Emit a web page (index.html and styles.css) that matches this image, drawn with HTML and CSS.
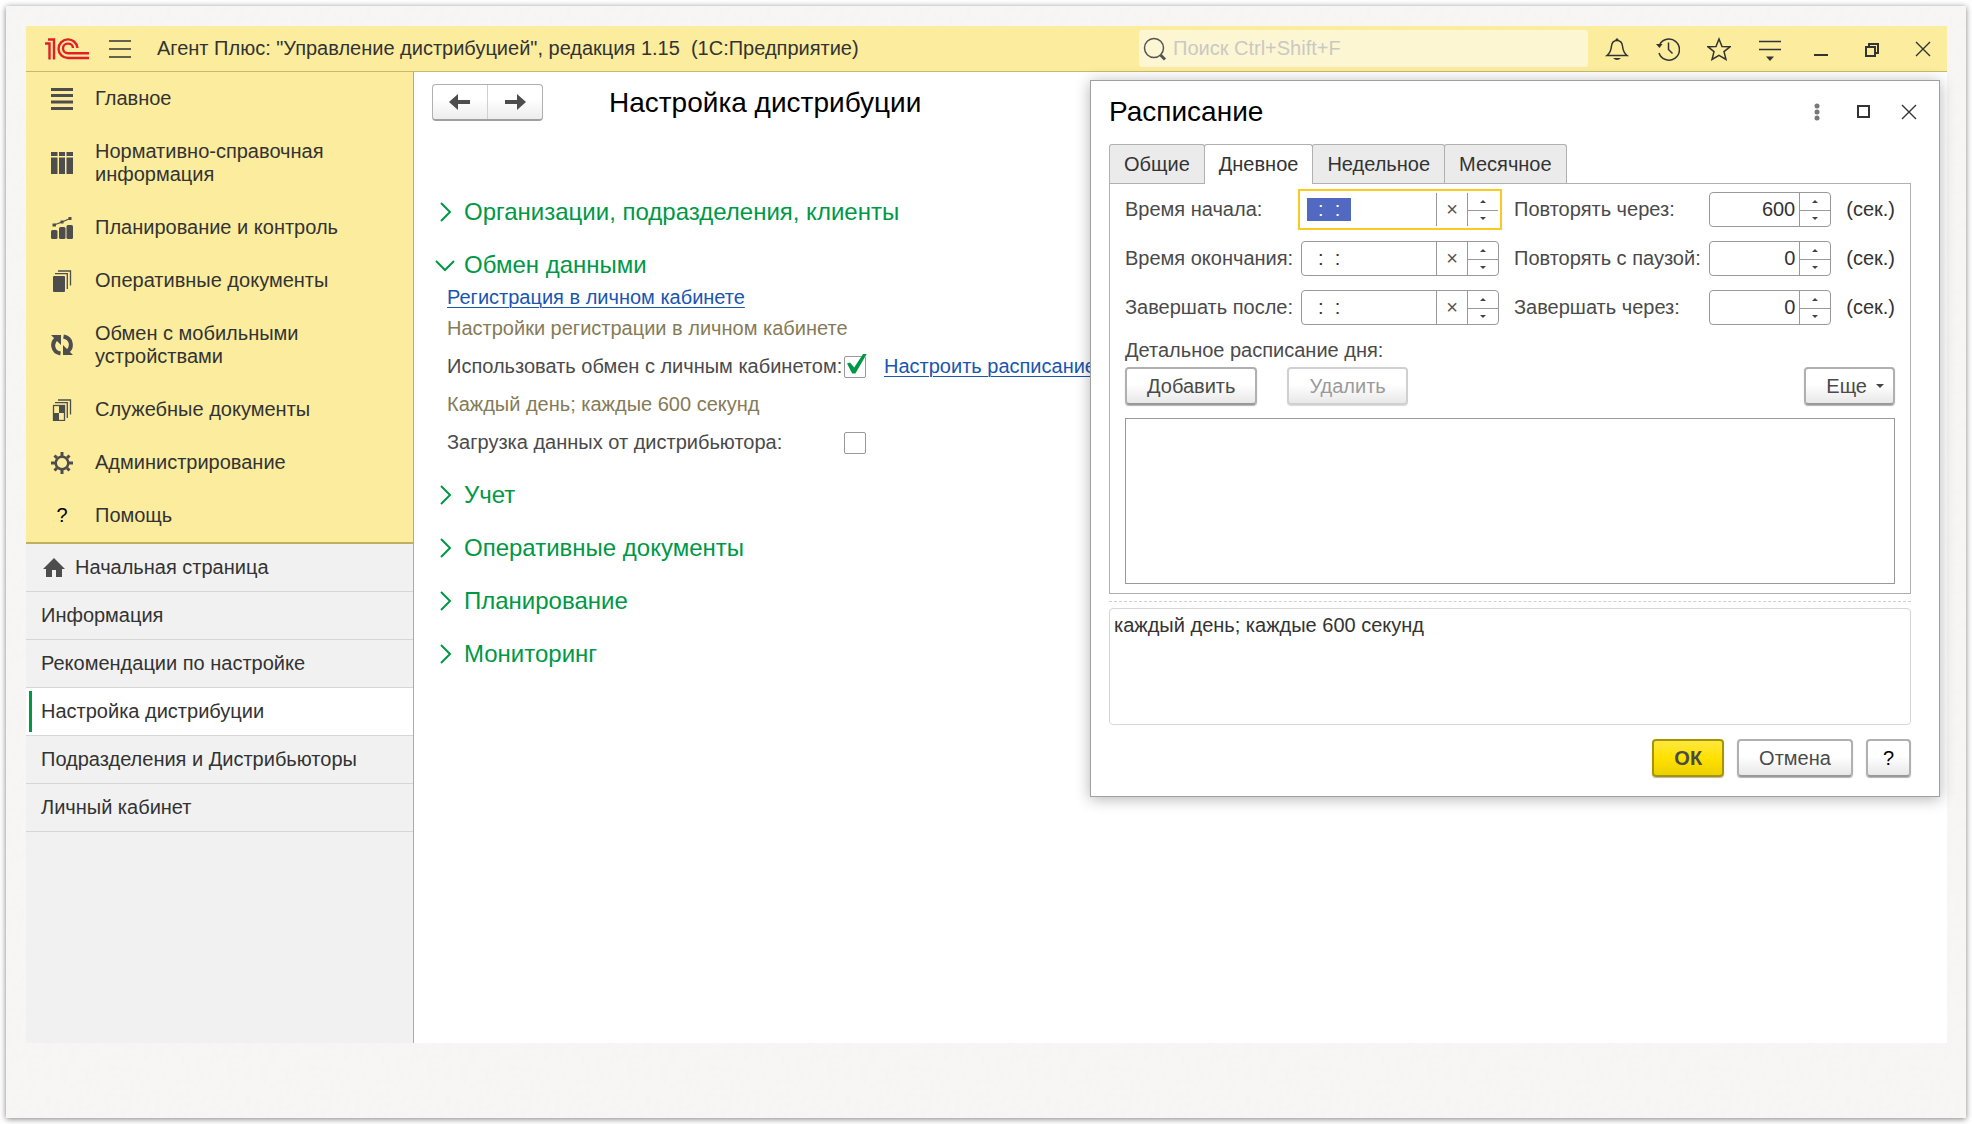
FILE: index.html
```html
<!DOCTYPE html>
<html lang="ru">

<head>
  <meta charset="UTF-8">
  <meta name="viewport" content="width=device-width, initial-scale=1.0">
  <title>Агент Плюс: Управление дистрибуцией</title>
  <link rel="stylesheet" href="styles.css">
</head>

<body>

  <div class="sheet">
    <div class="app">

      <!-- Top bar -->
      <header class="topbar">
        <svg class="logo" width="44" height="22" viewBox="0 0 44 22" fill="none" stroke="#e31e24" stroke-width="2.400">
          <path d="M0 5.500H4.500V21.500M3 1.500H9V21.500" />
          <path d="M32.500 10A9.500 9.300 0 1 0 23 20H44M28 10A5 4.800 0 1 0 23 15.200H44" />
        </svg>
        <button class="icon-btn burger" aria-label="Меню">
          <svg width="22" height="18" viewBox="0 0 22 18" stroke="#333" stroke-width="1.300"><path d="M0 1H22M0 9H22M0 17H22" /></svg>
        </button>
        <span class="app-title">Агент Плюс: "Управление дистрибуцией", редакция 1.15&nbsp; (1С:Предприятие)</span>
        <label class="search">
          <svg width="24" height="24" viewBox="0 0 24 24" fill="none" stroke="#555" stroke-width="1.500"><circle cx="11" cy="11" r="9.500" /><path d="M17.500 18L22 22.500" stroke-width="3" /></svg>
          <input type="text" placeholder="Поиск Ctrl+Shift+F" aria-label="Поиск">
        </label>
        <div class="top-icons">
          <button class="icon-btn" aria-label="Уведомления">
            <svg width="24" height="24" viewBox="0 0 24 24" fill="none" stroke="#333" stroke-width="1.500"><path d="M2 18.500C4 17 6 14 6.500 9C7 5 9 3.500 12 3.500S17 5 17.500 9C18 14 20 17 22 18.500Z" /><path d="M10 3.500Q12 -1 14 3.500Z M8 21H16Q12 25 8 21Z" fill="#333" stroke="none" /></svg>
          </button>
          <button class="icon-btn" aria-label="История">
            <svg width="24" height="24" viewBox="0 0 24 24" fill="none" stroke="#333" stroke-width="1.500"><path d="M3.500 8A10.500 10.500 0 1 1 3 16" /><path d="M12.500 5.500V12.500L16.500 16.500" /><path d="M0 7L6.500 7L3.500 11Z" fill="#333" stroke="none" /></svg>
          </button>
          <button class="icon-btn" aria-label="Избранное">
            <svg width="24" height="24" viewBox="0 0 24 24" fill="none" stroke="#333" stroke-width="1.500"><path d="M12 2L15 9.500L23 9.800L17 14.600L19 22.500L12 18.300L5 22.500L7 14.600L1 9.800L9 9.500Z" /></svg>
          </button>
          <button class="icon-btn" aria-label="Настройки">
            <svg width="24" height="24" viewBox="0 0 24 24" fill="none" stroke="#333" stroke-width="1.700"><path d="M1 4.500H23M1 12.500H23" /><path d="M8 19.500H16L12 24Z" fill="#333" stroke="none" /></svg>
          </button>
          <button class="icon-btn" aria-label="Свернуть">
            <svg width="24" height="24" viewBox="0 0 24 24"><path d="M5 17H19V19H5Z" fill="#333" /></svg>
          </button>
          <button class="icon-btn" aria-label="Восстановить">
            <svg width="24" height="24" viewBox="0 0 24 24" fill="none" stroke="#333" stroke-width="2"><path d="M6 10H15V19H6ZM9 10V7H18V16H15" /></svg>
          </button>
          <button class="icon-btn" aria-label="Закрыть">
            <svg width="24" height="24" viewBox="0 0 24 24" fill="none" stroke="#333" stroke-width="1.400"><path d="M5 5L19 19M19 5L5 19" /></svg>
          </button>
        </div>
      </header>

      <div class="workspace">

        <!-- Sidebar -->
        <aside class="sidebar">
          <nav class="sections">
            <a href="#">
              <svg width="22" height="22" viewBox="0 0 22 22" fill="#4d4d4d"><path d="M0 0H22V3H0ZM0 6H22V9H0ZM0 12.500H22V15.500H0ZM0 19H22V22H0Z" /></svg>
              Главное
            </a>
            <a href="#">
              <svg width="22" height="22" viewBox="0 0 22 22" fill="#4d4d4d"><path d="M0 0H6.500V4H0ZM8 0H14V4H8ZM15.500 0H22V4H15.500ZM0 5.500H6.500V22H0ZM8 5.500H14V22H8ZM15.500 5.500H22V22H15.500Z" /></svg>
              Нормативно-справочная информация
            </a>
            <a href="#">
              <svg width="22" height="22" viewBox="0 0 22 22" fill="#4d4d4d"><rect x="0" y="13" width="6.500" height="9" rx="1.500" /><rect x="8" y="10" width="6.500" height="12" rx="1.500" /><rect x="15.500" y="8" width="6.500" height="14" rx="1.500" /><path d="M3 8L11 5L19 1.500" stroke="#4d4d4d" stroke-width="1.300" /><path d="M1.500 6.500H5V9.500H1.500ZM9.500 3.500H12.500V6.500H9.500ZM17.500 0H20.500V3H17.500Z" /></svg>
              Планирование и контроль
            </a>
            <a href="#">
              <svg width="22" height="22" viewBox="0 0 22 22" fill="none" stroke="#4d4d4d" stroke-width="1.300"><rect x="2" y="6" width="12" height="16" rx="1" fill="#4d4d4d" stroke="none" /><path d="M4 3.700H16.300V19M7 1H19.500V15.500" /></svg>
              Оперативные документы
            </a>
            <a href="#">
              <svg width="22" height="22" viewBox="0 0 22 22" fill="none" stroke="#4d4d4d" stroke-width="4"><path d="M9.500 19.500C1 18 0 8 6 4.500M12.500 2.500C21 4 22 14 16 17.500" /><path d="M0 1H10V11ZM22 21H12V11Z" fill="#4d4d4d" stroke="none" /></svg>
              Обмен с мобильными устройствами
            </a>
            <a href="#">
              <svg width="22" height="22" viewBox="0 0 22 22" fill="none" stroke="#4d4d4d" stroke-width="1.300"><rect x="2.500" y="6.500" width="11" height="15" /><path d="M3 7H8V14H3ZM8 14H13V21H8Z" fill="#4d4d4d" stroke="none" transform="matrix(-1 0 0 1 16 0)" /><path d="M4 3.700H16.300V19M7 1H19.500V15.500" /></svg>
              Служебные документы
            </a>
            <a href="#">
              <svg width="22" height="22" viewBox="0 0 22 22" fill="none" stroke="#4d4d4d" stroke-width="3"><circle cx="11" cy="11" r="6.300" stroke-width="2.500" /><path d="M11 0V4M11 18V22M0 11H4M18 11H22M3.500 3.500L6 6M16 16L18.500 18.500M18.500 3.500L16 6M3.500 18.500L6 16" /></svg>
              Администрирование
            </a>
            <a href="#"><span class="help-mark">?</span>Помощь</a>
          </nav>
          <nav class="open-tabs">
            <a href="#" class="home">
              <svg width="22" height="20" viewBox="0 0 22 20" fill="#4d4d4d"><path d="M11 0L22 11H19V19H13V12H9V19H3V11H0Z" /></svg>
              Начальная страница
            </a>
            <a href="#">Информация</a>
            <a href="#">Рекомендации по настройке</a>
            <a href="#" class="active">Настройка дистрибуции</a>
            <a href="#">Подразделения и Дистрибьюторы</a>
            <a href="#">Личный кабинет</a>
          </nav>
        </aside>

        <!-- Settings page -->
        <main class="content">
          <div class="page-head">
            <div class="history-nav">
              <button aria-label="Назад"><svg width="22" height="16" viewBox="0 0 22 16" fill="#4d4d4d"><path d="M0 8L9 0V6H21V10H9V16Z" /></svg></button>
              <button aria-label="Вперед"><svg width="22" height="16" viewBox="0 0 22 16" fill="#4d4d4d"><path d="M22 8L13 0V6H1V10H13V16Z" /></svg></button>
            </div>
            <h1>Настройка дистрибуции</h1>
          </div>

          <div class="groups">
            <h2><svg width="20" height="20" viewBox="0 0 20 20"><path d="M6 1L15 10L6 19" /></svg>Организации, подразделения, клиенты</h2>

            <h2><svg width="20" height="20" viewBox="0 0 20 20"><path d="M1 6L10 15L19 6" /></svg>Обмен данными</h2>
            <div class="group-body">
              <div class="register">
                <a href="#">Регистрация в личном кабинете</a>
                <p>Настройки регистрации в личном кабинете</p>
              </div>
              <div class="option">
                <label for="useExchange">Использовать обмен с личным кабинетом:</label>
                <input type="checkbox" id="useExchange" checked>
                <a href="#">Настроить расписание</a>
              </div>
              <p>Каждый день; каждые 600 секунд</p>
              <div class="option">
                <label for="loadData">Загрузка данных от дистрибьютора:</label>
                <input type="checkbox" id="loadData">
              </div>
            </div>

            <h2><svg width="20" height="20" viewBox="0 0 20 20"><path d="M6 1L15 10L6 19" /></svg>Учет</h2>
            <h2><svg width="20" height="20" viewBox="0 0 20 20"><path d="M6 1L15 10L6 19" /></svg>Оперативные документы</h2>
            <h2><svg width="20" height="20" viewBox="0 0 20 20"><path d="M6 1L15 10L6 19" /></svg>Планирование</h2>
            <h2><svg width="20" height="20" viewBox="0 0 20 20"><path d="M6 1L15 10L6 19" /></svg>Мониторинг</h2>
          </div>
        </main>
      </div>

      <!-- Schedule window -->
      <section class="dialog" role="dialog" aria-labelledby="dialogTitle">
        <div class="dialog-head">
          <h1 id="dialogTitle">Расписание</h1>
          <div class="dialog-icons">
            <button class="icon-btn" aria-label="Еще"><svg width="24" height="24" viewBox="0 0 24 24" fill="#777"><circle cx="12" cy="6" r="2.500" /><circle cx="12" cy="12" r="2.500" /><circle cx="12" cy="18" r="2.500" /></svg></button>
            <button class="icon-btn" aria-label="Развернуть"><svg width="24" height="24" viewBox="0 0 24 24" fill="none" stroke="#333" stroke-width="2"><path d="M7 6H18V17H7Z" /></svg></button>
            <button class="icon-btn" aria-label="Закрыть"><svg width="24" height="24" viewBox="0 0 24 24" fill="none" stroke="#333" stroke-width="1.400"><path d="M5 5L19 19M19 5L5 19" /></svg></button>
          </div>
        </div>

        <div class="tabs" role="tablist">
          <button role="tab">Общие</button>
          <button role="tab" class="active">Дневное</button>
          <button role="tab">Недельное</button>
          <button role="tab">Месячное</button>
        </div>

        <div class="panel">
          <div class="fields">
            <label for="timeStart">Время начала:</label>
            <div class="field">
              <input type="text" id="timeStart" value="  :  :  ">
              <button class="clear" aria-label="Очистить">×</button>
              <div class="spin"><button aria-label="Больше"></button><button aria-label="Меньше"></button></div>
            </div>
            <label for="repeatEvery" class="second">Повторять через:</label>
            <div class="field number">
              <input type="text" id="repeatEvery" value="600">
              <div class="spin"><button aria-label="Больше"></button><button aria-label="Меньше"></button></div>
            </div>
            <span class="unit">(сек.)</span>

            <label for="timeEnd">Время окончания:</label>
            <div class="field">
              <input type="text" id="timeEnd" value="  :  :  ">
              <button class="clear" aria-label="Очистить">×</button>
              <div class="spin"><button aria-label="Больше"></button><button aria-label="Меньше"></button></div>
            </div>
            <label for="repeatPause" class="second">Повторять с паузой:</label>
            <div class="field number">
              <input type="text" id="repeatPause" value="0">
              <div class="spin"><button aria-label="Больше"></button><button aria-label="Меньше"></button></div>
            </div>
            <span class="unit">(сек.)</span>

            <label for="finishAfter">Завершать после:</label>
            <div class="field">
              <input type="text" id="finishAfter" value="  :  :  ">
              <button class="clear" aria-label="Очистить">×</button>
              <div class="spin"><button aria-label="Больше"></button><button aria-label="Меньше"></button></div>
            </div>
            <label for="finishIn" class="second">Завершать через:</label>
            <div class="field number">
              <input type="text" id="finishIn" value="0">
              <div class="spin"><button aria-label="Больше"></button><button aria-label="Меньше"></button></div>
            </div>
            <span class="unit">(сек.)</span>
          </div>

          <p class="caption">Детальное расписание дня:</p>
          <div class="commands">
            <button class="btn">Добавить</button>
            <button class="btn" disabled>Удалить</button>
            <button class="btn more">Еще <span class="caret"></span></button>
          </div>
          <div class="day-list"></div>
        </div>

        <hr>
        <textarea class="summary" aria-label="Описание расписания" readonly>каждый день; каждые 600 секунд</textarea>

        <div class="actions">
          <button class="btn primary">ОК</button>
          <button class="btn">Отмена</button>
          <button class="btn help">?</button>
        </div>
      </section>

    </div>
  </div>

  <script>
    // Start editing from the first time field
    document.getElementById('timeStart').focus();
    document.getElementById('timeStart').select();
  </script>

</body>

</html>
```
FILE: styles.css
```css
* {
  box-sizing: border-box;
}

body {
  margin: 0;
  padding: 6px;
  min-height: 100vh;
  display: flex;
  background-color: #fff;
  font-family: "Liberation Sans", Arial, sans-serif;
  font-size: 20px;
  line-height: 23px;
  color: #333;
}

h1, h2, p {
  margin: 0;
  font-weight: normal;
}

h1 {
  font-size: 28px;
  line-height: 32px;
  color: #000;
}

button,
input,
textarea {
  font-family: inherit;
  font-size: inherit;
  color: inherit;
}

button {
  padding: 0;
  cursor: pointer;
}

svg {
  display: block;
  flex: none;
}

/* Paper sheet around the window */
.sheet {
  flex: 1;
  display: flex;
  padding: 20px 19px 75px 20px;
  background-color: #f6f5f3;
  background-image: url("data:image/svg+xml,%3Csvg xmlns='http://www.w3.org/2000/svg' width='100' height='100'%3E%3Cfilter id='p' x='0' y='0' width='100%25' height='100%25'%3E%3CfeTurbulence type='fractalNoise' baseFrequency='0.12' numOctaves='3' stitchTiles='stitch'/%3E%3CfeDiffuseLighting lighting-color='white' surfaceScale='1'%3E%3CfeDistantLight azimuth='225' elevation='60'/%3E%3C/feDiffuseLighting%3E%3C/filter%3E%3Crect width='100' height='100' filter='url(%23p)' opacity='0.06'/%3E%3C/svg%3E");
  box-shadow: 0 1px 6px rgba(0, 0, 0, 0.5);
}

.app {
  position: relative;
  flex: 1;
  display: flex;
  flex-direction: column;
  background-color: #fff;
}

/* Top bar */
.topbar {
  display: flex;
  align-items: center;
  height: 46px;
  padding: 0 12px 0 19px;
  background-color: #fbec9e;
  border-bottom: 1px solid #c8b96a;
}

.icon-btn {
  display: flex;
  border: none;
  background: none;
}

.burger {
  margin: 0 26px 0 20px;
}

.app-title {
  flex: 1;
  white-space: nowrap;
}

.search {
  display: flex;
  align-items: center;
  gap: 6px;
  width: 449px;
  height: 37px;
  padding: 0 4px;
  border-radius: 3px;
  background-color: #fdf6d3;
}

.search input {
  flex: 1;
  min-width: 0;
  padding: 0;
  border: none;
  outline: none;
  background: none;
}

.search input::placeholder {
  color: #c9c9c4;
}

.top-icons {
  display: flex;
  gap: 27px;
  margin-left: 17px;
}

/* Sidebar */
.workspace {
  flex: 1;
  display: flex;
}

.sidebar {
  width: 388px;
  background-color: #f1f1f1;
  border-right: 1px solid #b9b060;
}

.sidebar a {
  color: inherit;
  text-decoration: none;
}

.sections {
  background-color: #fbec9e;
  border-bottom: 2px solid #bfb060;
}

.sections a {
  display: flex;
  align-items: center;
  gap: 22px;
  padding: 15px 60px 15px 25px;
}

.help-mark {
  width: 22px;
  color: #000;
  text-align: center;
}

.open-tabs a {
  display: flex;
  align-items: center;
  height: 48px;
  padding-left: 15px;
  border-bottom: 1px solid #d6d6d6;
}

.open-tabs .home {
  gap: 10px;
  padding-left: 17px;
}

.open-tabs .active {
  position: relative;
  background-color: #fff;
}

.open-tabs .active::before {
  content: "";
  position: absolute;
  left: 3px;
  top: 3px;
  bottom: 3px;
  width: 3px;
  background-color: #009846;
}

/* Settings page */
.content {
  flex: 1;
  min-width: 0;
  padding: 12px 18px;
}

.page-head {
  display: flex;
  align-items: center;
  gap: 66px;
}

.history-nav {
  display: flex;
  width: 111px;
  height: 37px;
  border: 1px solid #b0b0b0;
  border-bottom: 2px solid #a0a0a0;
  border-radius: 4px;
  background: linear-gradient(#fff 40%, #ededed);
}

.history-nav button {
  flex: 1;
  display: flex;
  align-items: center;
  justify-content: center;
  border: none;
  background: none;
}

.history-nav button + button {
  border-left: 1px solid #d0d0d0;
}

.groups {
  margin-top: 64px;
}

.groups h2 {
  display: flex;
  align-items: center;
  gap: 9px;
  padding: 13px 0 13px 3px;
  font-size: 24px;
  line-height: 27px;
  color: #009846;
}

.groups h2 path {
  fill: none;
  stroke: #009846;
  stroke-width: 2;
}

.group-body {
  display: flex;
  flex-direction: column;
  gap: 15px;
  margin: -5px 0 14px;
  padding-left: 15px;
}

.group-body p {
  color: #857b58;
}

.group-body a {
  color: #1a55b0;
  text-underline-offset: 3px;
  text-decoration-thickness: 1px;
}

.register {
  display: grid;
  gap: 8px;
}

.option {
  display: flex;
  align-items: center;
  height: 23px;
  color: #4a4a4a;
  white-space: nowrap;
}

.option label {
  width: 397px;
}

.option input {
  appearance: none;
  position: relative;
  width: 22px;
  height: 22px;
  margin: 0 18px 0 0;
  border: 1px solid #999;
  border-radius: 2px;
  background-color: #fff;
}

/* Tick that runs out over the top right corner */
.option input:checked::after {
  content: "";
  position: absolute;
  left: 2px;
  top: -3px;
  width: 20px;
  height: 20px;
  background-color: #009846;
  clip-path: polygon(0 50%, 15% 45%, 36% 70%, 82% 0, 100% 0, 42% 100%, 26% 100%);
}

/* Schedule window */
.dialog {
  position: absolute;
  top: 54px;
  right: 7px;
  width: 850px;
  padding: 15px 28px 19px 18px;
  border: 1px solid #a0a0a0;
  background-color: #fff;
  box-shadow: 0 2px 14px rgba(0, 0, 0, 0.3);
}

.dialog-head {
  display: flex;
  align-items: center;
  justify-content: space-between;
}

.dialog-icons {
  display: flex;
  gap: 22px;
  margin-right: -10px;
}

.tabs {
  display: flex;
  margin-top: 16px;
}

.tabs button {
  height: 39px;
  padding: 0 14px;
  border: 1px solid #b0b0b0;
  border-bottom: none;
  border-radius: 3px 3px 0 0;
  background-color: #ebebeb;
}

.tabs button + button {
  margin-left: -1px;
}

.tabs .active {
  position: relative;
  height: 40px;
  margin-bottom: -1px;
  background-color: #fff;
}

.panel {
  padding: 8px 15px 9px;
  border: 1px solid #b0b0b0;
}

.fields {
  display: grid;
  grid-template-columns: 176px 198px 1fr 122px auto;
  align-items: center;
  row-gap: 14px;
  color: #4a4a4a;
  white-space: nowrap;
}

.fields .second {
  padding-left: 15px;
}

.unit {
  padding-left: 15px;
  color: #333;
}

.field {
  display: flex;
  height: 35px;
  border: 1px solid #999;
  border-radius: 4px;
  color: #333;
}

.field input {
  flex: 1;
  min-width: 0;
  padding: 0 5px;
  border: none;
  outline: none;
  background: none;
}

.field input::selection {
  background-color: #5269c2;
  color: #fff;
}

.field.number input {
  padding: 0 4px;
  text-align: right;
}

.field:focus-within {
  border-color: transparent;
  outline: 2px solid #fcc91e;
  outline-offset: 1px;
  border-radius: 0;
}

.clear {
  width: 31px;
  border: none;
  border-left: 1px solid #999;
  background: none;
  color: #555;
}

.spin {
  display: grid;
  grid-template-rows: 1fr 1fr;
  width: 31px;
  border-left: 1px solid #999;
}

.spin button {
  display: flex;
  align-items: center;
  justify-content: center;
  border: none;
  background: none;
}

.spin button + button {
  border-top: 1px solid #999;
}

.spin button::before {
  content: "";
  border: 3px solid transparent;
  border-top: none;
  border-bottom-color: #444;
}

.spin button + button::before {
  border-top: 3px solid #444;
  border-bottom: none;
}

.caption {
  margin: 14px 0 5px;
  color: #4a4a4a;
}

.btn {
  height: 38px;
  padding: 0 20px;
  border: 2px solid #b0b0b0;
  border-bottom-color: #999;
  border-radius: 4px;
  background: linear-gradient(#fff 45%, #e8e8e8);
  box-shadow: 0 1px 1px rgba(0, 0, 0, 0.3);
  color: #4a4a4a;
}

.btn:disabled {
  border-color: #d0d0d0;
  box-shadow: 0 1px 1px rgba(0, 0, 0, 0.15);
  color: #9a9a9a;
}

.commands {
  display: flex;
  gap: 30px;
}

.more {
  display: flex;
  align-items: center;
  gap: 9px;
  margin-left: auto;
  padding: 0 9px 0 20px;
}

.caret {
  border: 4px solid transparent;
  border-top-color: #444;
  border-bottom: none;
}

.day-list {
  height: 166px;
  margin-top: 13px;
  border: 1px solid #999;
}

.dialog hr {
  margin: 7px 0 6px;
  border: none;
  border-top: 1px dashed #d0d0d0;
}

.summary {
  display: block;
  width: 100%;
  height: 117px;
  padding: 5px 4px;
  border: 1px solid #d6d6d6;
  border-radius: 4px;
  outline: none;
  resize: none;
  line-height: 23px;
}

.actions {
  display: flex;
  justify-content: flex-end;
  gap: 13px;
  margin-top: 14px;
}

.actions .primary {
  border-color: #a89400;
  background: linear-gradient(#ffe840, #ffe100 50%, #ecd000);
  font-weight: bold;
}

.actions .help {
  padding: 0 15px;
  color: #000;
}
```
